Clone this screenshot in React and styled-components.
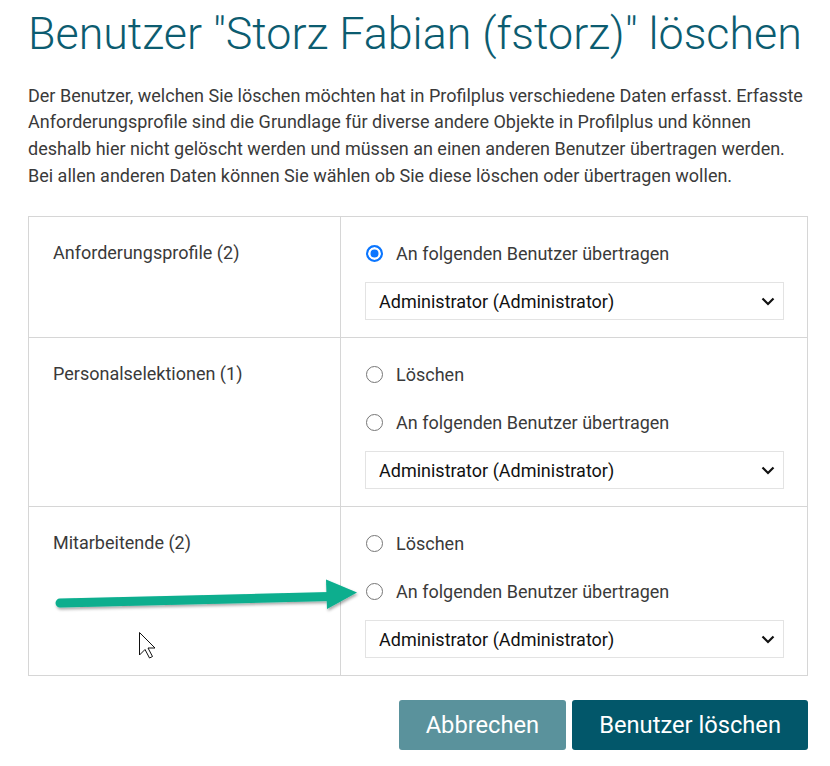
import React from 'react';
import styled, { createGlobalStyle } from 'styled-components';

const GlobalStyle = createGlobalStyle`
  body {
    margin: 0;
    background: #ffffff;
    font-family: Roboto, 'Liberation Sans', sans-serif;
    color: #333333;
  }
`;

const StyledPage = styled.div`
  position: relative;
  width: 780px;
  padding: 6px 22px 16px 28px;
`;

const StyledTitle = styled.h1`
  margin: 0;
  font-size: 44.8px;
  line-height: 55px;
  font-weight: 300;
  color: #0c5c70;
  white-space: nowrap;
`;

const StyledIntro = styled.p`
  margin: 21.5px 0 27px 0;
  font-size: 18px;
  line-height: 26.67px;
  color: #3a3a3a;
`;

const StyledTable = styled.div`
  border: 1px solid #d6d6d6;
  border-bottom: none;
`;

const StyledRow = styled.div`
  display: grid;
  grid-template-columns: 312px 1fr;
  border-bottom: 1px solid #d6d6d6;
`;

const StyledLabel = styled.div`
  padding: 23px 24px;
  border-right: 1px solid #d6d6d6;
  font-size: 18px;
  line-height: 26px;
  color: #3a3a3a;
`;

const StyledOptions = styled.div`
  display: flex;
  flex-direction: column;
  gap: 22px;
  padding: 23px 23px 17px 24px;
`;

const StyledOption = styled.label`
  display: flex;
  align-items: center;
  gap: 13px;
  height: 26px;
  padding-left: 1px;
  font-size: 18px;
  color: #3a3a3a;
`;

const StyledRadio = styled.input.attrs({ type: 'radio' })`
  appearance: none;
  width: 17px;
  height: 17px;
  margin: 0;
  border-radius: 50%;
  border: 1.5px solid #767676;
  background: #ffffff;
  &:checked {
    border: 2px solid #0b76ff;
    background: #0b76ff;
    box-shadow: inset 0 0 0 2.5px #ffffff;
  }
`;

const StyledSelectWrap = styled.div`
  position: relative;
  margin-top: -6px;
  svg {
    position: absolute;
    right: 8px;
    top: 13px;
    pointer-events: none;
  }
`;

const StyledSelect = styled.select`
  appearance: none;
  width: 100%;
  height: 38px;
  padding: 0 13px;
  border: 1px solid #e3e3e3;
  border-radius: 0;
  background: #ffffff;
  font-family: Roboto, 'Liberation Sans', sans-serif;
  font-size: 18px;
  color: #111111;
`;

const StyledActions = styled.div`
  display: flex;
  justify-content: flex-end;
  gap: 6px;
  margin-top: 24px;
`;

const StyledButton = styled.button`
  height: 50px;
  padding: 0 27px;
  border: none;
  border-radius: 3px;
  background: ${(p) => (p.primary ? '#02576a' : '#5a929c')};
  color: #ffffff;
  font-family: Roboto, 'Liberation Sans', sans-serif;
  font-size: 23.7px;
`;

const StyledOverlay = styled.svg`
  position: absolute;
  left: 0;
  top: 0;
  pointer-events: none;
  overflow: visible;
`;

const rows = [
  { label: 'Anforderungsprofile (2)', canDelete: false, checked: true },
  { label: 'Personalselektionen (1)', canDelete: true, checked: false },
  { label: 'Mitarbeitende (2)', canDelete: true, checked: false },
];

const Chevron = () => (
  <svg width="16" height="12" viewBox="0 0 16 12">
    <path d="M2.5 3.5 L8 9 L13.5 3.5" fill="none" stroke="#111" strokeWidth="2.2" />
  </svg>
);

const App = () => {
  return (
    <>
      <GlobalStyle />
      <StyledPage>
        <StyledTitle>Benutzer "Storz Fabian (fstorz)" löschen</StyledTitle>
        <StyledIntro>
          Der Benutzer, welchen Sie löschen möchten hat in Profilplus verschiedene Daten erfasst. Erfasste
          Anforderungsprofile sind die Grundlage für diverse andere Objekte in Profilplus und können
          deshalb hier nicht gelöscht werden und müssen an einen anderen Benutzer übertragen werden.
          Bei allen anderen Daten können Sie wählen ob Sie diese löschen oder übertragen wollen.
        </StyledIntro>

        <StyledTable>
          {rows.map((row, i) => (
            <StyledRow key={row.label}>
              <StyledLabel>{row.label}</StyledLabel>
              <StyledOptions>
                {row.canDelete && (
                  <StyledOption>
                    <StyledRadio name={'r' + i} defaultChecked={false} />
                    Löschen
                  </StyledOption>
                )}
                <StyledOption>
                  <StyledRadio name={'r' + i} defaultChecked={row.checked} />
                  An folgenden Benutzer übertragen
                </StyledOption>
                <StyledSelectWrap>
                  <StyledSelect defaultValue="admin">
                    <option value="admin">Administrator (Administrator)</option>
                  </StyledSelect>
                  <Chevron />
                </StyledSelectWrap>
              </StyledOptions>
            </StyledRow>
          ))}
        </StyledTable>

        <StyledActions>
          <StyledButton>Abbrechen</StyledButton>
          <StyledButton primary>Benutzer löschen</StyledButton>
        </StyledActions>

        {/* annotation arrow and mouse pointer from the screenshot */}
        <StyledOverlay width="830" height="766">
          <defs>
            <filter id="shadow" x="-10%" y="-50%" width="120%" height="200%">
              <feDropShadow dx="1" dy="2" stdDeviation="1.5" floodColor="#000" floodOpacity="0.35" />
            </filter>
          </defs>
          <g filter="url(#shadow)" fill="#08ae8e" stroke="#08ae8e">
            <line x1="60" y1="603" x2="330" y2="596.5" strokeWidth="9" strokeLinecap="round" />
            <polygon points="357,592.5 326,579.5 327,609" stroke="none" />
          </g>
          <path
            d="M139.5 632.5 L139.5 655 L145 649.5 L149.5 658 L152.5 656.5 L148 648 L155 648 Z"
            fill="#ffffff"
            stroke="#111"
            strokeWidth="1"
            strokeLinejoin="round"
          />
        </StyledOverlay>
      </StyledPage>
    </>
  );
}

export default App;
